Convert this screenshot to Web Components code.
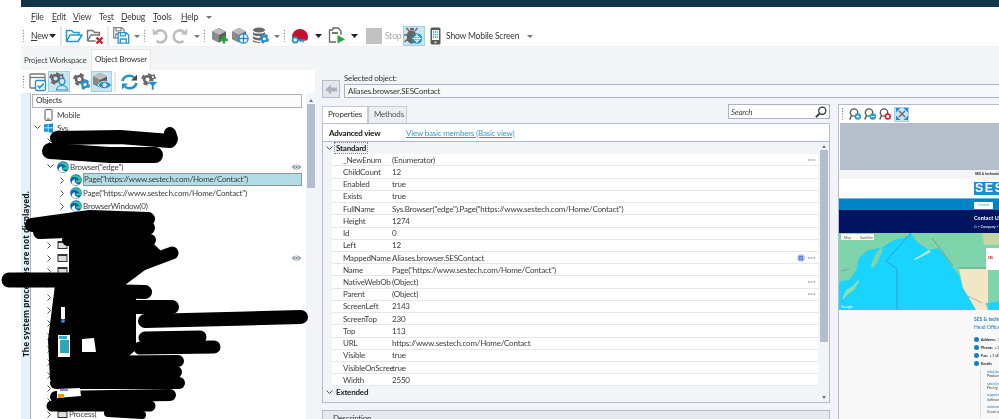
<!DOCTYPE html>
<html><head><meta charset="utf-8"><title>Object Browser</title>
<style>
html,body{margin:0;padding:0;background:#fff;overflow:hidden}
body{width:999px;height:419px;font:8px Lato,"Noto Sans",sans-serif;letter-spacing:-.2px;color:#333}
</style></head><body>
<x-app>
  <x-menubar slot="menu">
    <x-m style="width:21px"><u>F</u>ile</x-m><x-m style="width:21px"><u>E</u>dit</x-m><x-m style="width:26px"><u>V</u>iew</x-m><x-m style="width:22px">Te<u>s</u>t</x-m><x-m style="width:32px"><u>D</u>ebug</x-m><x-m style="width:28px"><u>T</u>ools</x-m><x-m style="width:25px"><u>H</u>elp</x-m><x-icon name="caret" style="width:6px"></x-icon>
  </x-menubar>
  <x-toolbar slot="tools">
    <x-icon name="grip" style="width:3px"></x-icon>
    <x-m style="margin-left:6px;width:18px"><u>N</u>ew</x-m><x-icon name="caretd" style="margin-left:0;width:6px"></x-icon>
    <x-icon name="sep" style="margin-left:5px;width:2px"></x-icon>
    <x-icon name="open" style="margin-left:3px;width:18px"></x-icon>
    <x-icon name="closex" style="margin-left:3px;width:18px"></x-icon>
    <x-icon name="sep" style="margin-left:3px;width:2px"></x-icon>
    <x-icon name="save" style="margin-left:3px;width:18px"></x-icon>
    <x-icon name="caret" style="margin-left:4px;width:6px"></x-icon>
    <x-icon name="grip" style="margin-left:3px;width:3px"></x-icon>
    <x-icon name="undo" style="margin-left:5px;width:17px"></x-icon>
    <x-icon name="redo" style="margin-left:4px;width:17px"></x-icon>
    <x-icon name="caret" style="margin-left:5px;width:6px"></x-icon>
    <x-icon name="grip" style="margin-left:3px;width:3px"></x-icon>
    <x-icon name="objadd" style="margin-left:5px;width:18px"></x-icon>
    <x-icon name="objnet" style="margin-left:2px;width:18px"></x-icon>
    <x-icon name="dbgear" style="margin-left:3px;width:17px"></x-icon>
    <x-icon name="caret" style="margin-left:5px;width:6px"></x-icon>
    <x-icon name="grip" style="margin-left:3px;width:3px"></x-icon>
    <x-icon name="record" style="margin-left:5px;width:18px"></x-icon>
    <x-icon name="caretd" style="margin-left:6px;width:7px"></x-icon>
    <x-icon name="run" style="margin-left:6px;width:18px"></x-icon>
    <x-icon name="caretd" style="margin-left:5px;width:7px"></x-icon>
    <x-icon name="stop" style="margin-left:8px;width:16px"></x-icon>
    <x-m style="margin-left:3px;width:15px;color:#aaa">Stop</x-m>
    <x-icon name="bug" on style="margin-left:3px;width:22px"></x-icon>
    <x-icon name="mobile" style="margin-left:4px;width:12px"></x-icon>
    <x-m style="margin-left:5px;width:76px">Show Mobile Screen</x-m>
    <x-icon name="caret" style="margin-left:5px;width:6px"></x-icon>
  </x-toolbar>
  <x-tabs slot="tabs"></x-tabs>
  <x-objects slot="left">
    <x-tree-row icon="mobile" label="Mobile" indent="0"></x-tree-row>
    <x-tree-row icon="win" label="Sys" indent="0" exp="v"></x-tree-row>
    <x-tree-row icon="edge" indent="1" exp=">"></x-tree-row>
    <x-tree-row icon="edge" indent="1" exp=">"></x-tree-row>
    <x-tree-row icon="edge" label="Browser(&quot;edge&quot;)" indent="1" exp="v" eye></x-tree-row>
    <x-tree-row icon="edge" label="Page(&quot;https://www.sestech.com/Home/Contact&quot;)" indent="2" exp=">" selected></x-tree-row>
    <x-tree-row icon="edge" label="Page(&quot;https://www.sestech.com/Home/Contact&quot;)" indent="2" exp=">"></x-tree-row>
    <x-tree-row icon="edge" label="BrowserWindow(0)" indent="2" exp=">"></x-tree-row>
    <x-tree-row icon="proc" indent="1" exp=">"></x-tree-row>
    <x-tree-row icon="proc" indent="1" exp=">"></x-tree-row>
    <x-tree-row icon="proc" indent="1" exp=">"></x-tree-row>
    <x-tree-row icon="proc" indent="1" exp=">" eye></x-tree-row>
    <x-tree-row icon="proc" indent="1" exp=">"></x-tree-row>
    <x-tree-row icon="proc" indent="1" exp=">"></x-tree-row>
    <x-tree-row icon="proc" indent="1" exp=">"></x-tree-row>
    <x-tree-row icon="proc" indent="1" exp=">"></x-tree-row>
    <x-tree-row icon="proc" indent="1" exp=">"></x-tree-row>
    <x-tree-row icon="proc" indent="1" exp=">"></x-tree-row>
    <x-tree-row icon="proc" indent="1" exp=">"></x-tree-row>
    <x-tree-row icon="proc" indent="1" exp=">"></x-tree-row>
    <x-tree-row icon="proc" indent="1" exp=">"></x-tree-row>
    <x-tree-row icon="proc" indent="1" exp=">"></x-tree-row>
    <x-tree-row icon="proc" indent="1" exp=">"></x-tree-row>
    <x-tree-row icon="proc" label="Process(" indent="1" exp=">"></x-tree-row>
  </x-objects>
  <x-props slot="right">
    <x-prop k="_NewEnum" v="(Enumerator)" dots></x-prop>
    <x-prop k="ChildCount" v="12"></x-prop>
    <x-prop k="Enabled" v="true"></x-prop>
    <x-prop k="Exists" v="true"></x-prop>
    <x-prop k="FullName" v="Sys.Browser(&quot;edge&quot;).Page(&quot;https://www.sestech.com/Home/Contact&quot;)"></x-prop>
    <x-prop k="Height" v="1274"></x-prop>
    <x-prop k="Id" v="0"></x-prop>
    <x-prop k="Left" v="12"></x-prop>
    <x-prop k="MappedName" v="Aliases.browser.SESContact" dots mark></x-prop>
    <x-prop k="Name" v="Page(&quot;https://www.sestech.com/Home/Contact&quot;)"></x-prop>
    <x-prop k="NativeWebOb" v="(Object)" dots></x-prop>
    <x-prop k="Parent" v="(Object)" dots></x-prop>
    <x-prop k="ScreenLeft" v="2143"></x-prop>
    <x-prop k="ScreenTop" v="230"></x-prop>
    <x-prop k="Top" v="113"></x-prop>
    <x-prop k="URL" v="https://www.sestech.com/Home/Contact"></x-prop>
    <x-prop k="Visible" v="true"></x-prop>
    <x-prop k="VisibleOnScree" v="true"></x-prop>
    <x-prop k="Width" v="2550"></x-prop>
    <x-preview slot="pv"></x-preview>
  </x-props>
  <x-scribble slot="over"></x-scribble>
</x-app>
<script>
const gear=(x,y,r,c)=>`<circle cx="${x}" cy="${y}" r="${r*.55}" fill="none" stroke="${c}" stroke-width="${r*.42}"/><circle cx="${x}" cy="${y}" r="${r*.88}" fill="none" stroke="${c}" stroke-width="${r*.32}" stroke-dasharray="${r*.7} ${r*.68}"/>`;
const cube=(c='#5c5c5c')=>`<path d="M1 4.5 8 1l7 3.5V12l-7 3.5L1 12z" fill="${c}"/><path d="M1 4.5 8 1l7 3.5L8 8z" fill="#bdbdbd"/><path d="M8 8v7.5L1 12V4.5z" fill="#8a8a8a"/>`;
const floppy=(c,x=0,y=0)=>`<g transform="translate(${x} ${y})" fill="none" stroke="${c}" stroke-width="1.3"><path d="M.7.7h8l2.5 2.5v8H.7z" fill="#fff"/><path d="M3 .7v3.2h5V.7M2.8 11V7h6v4"/></g>`;
const ICONS={
 caret:[6,16,`<path d="M0 7h6L3 10z" fill="#777"/>`],
 caretd:[7,16,`<path d="M0 6h7L3.5 10z" fill="#222"/>`],
 grip:[3,16,`<path d="M1.5 2v12" stroke="#888" stroke-width="1.2" stroke-dasharray="1.2 1.6"/>`],
 sep:[2,20,`<path d="M1 0v20" stroke="#dcdfe6" stroke-width="1.5"/>`],
 open:[18,16,`<path d="M1.5 13.5V2.5h5l2 2h5.5v2.5M1.5 13.5h11.5L17 7H5z" fill="none" stroke="#1f9ad8" stroke-width="1.5" stroke-linejoin="round"/>`],
 closex:[18,16,`<path d="M1.5 13V2.5h5l2 2h5V7M1.5 13h8M1.5 13 5 7h9" fill="none" stroke="#777" stroke-width="1.4"/><path d="M10.5 9.5l6 6m0-6-6 6" stroke="#d4202a" stroke-width="2.4"/>`],
 save:[18,18,floppy('#888',1,0)+floppy('#1f9ad8',5.5,5)],
 undo:[17,17,`<path d="M5 5.2A6 6 0 1 1 5.5 14" fill="none" stroke="#bfbfbf" stroke-width="2.6"/><path d="M1.5 1.5 2 8l6-.8z" fill="#bfbfbf"/>`],
 redo:[17,17,`<path d="M12 5.2A6 6 0 1 0 11.5 14" fill="none" stroke="#bfbfbf" stroke-width="2.6"/><path d="M15.5 1.5 15 8l-6-.8z" fill="#bfbfbf"/>`],
 objadd:[18,17,cube()+`<path d="M13 9v7.5M9.2 12.7h7.6" stroke="#22a838" stroke-width="2.6"/>`],
 objnet:[18,17,cube()+`<circle cx="12.5" cy="11.5" r="4.6" fill="#fff" stroke="#1f8fd0" stroke-width="1.3"/><path d="M12.5 7v9M8 11.5h9" stroke="#1f8fd0" stroke-width="1.3"/>`],
 dbgear:[17,17,`<g fill="#6a6a6a"><ellipse cx="7" cy="3" rx="6" ry="2.4"/><path d="M1 5c1 2 11 2 12 0v2.4c-1 2-11 2-12 0zM1 9c1 2 8 2 8 2v2.4c-3 0-7-.5-8-2zM1 13c1 1.6 6 2 7 2v1c-2 0-6-.3-7-1.5z"/></g>`+gear(12.3,11.8,4.6,'#1f8fd0')],
 record:[18,17,`<path d="M1 10a8 8 0 0 1 16 0c0 1.5-.4 2.5-1 3.5H7.500A4 4 0 0 0 1.500 11z" fill="#c8102e"/><circle cx="4.200" cy="13" r="2.600" fill="none" stroke="#1f8fd0" stroke-width="1.700"/><path d="M6.800 13H14m-2 0v2.500m-2.500-2.500v2" stroke="#1f8fd0" stroke-width="1.600"/>`],
 run:[18,17,`<path d="M5 3V1h5l3 3v4M5 3H1.500v12H8" fill="none" stroke="#666" stroke-width="1.300"/><rect x="4" y="5" width="6" height="2" fill="#777"/><path d="M9.500 8 17 12.200 9.500 16.500z" fill="#22a838"/>`],
 stop:[16,16,`<rect width="16" height="16" fill="#c2c2c2"/>`],
 bug:[22,20,`<path d="M6 4.500h5l2 3v7l-3 3H7l-3-3v-7z" fill="#666"/><path d="M6 5 3.500 2m8.500 3 2.500-3M4 9H1M4 13.500 1.500 16" stroke="#666" stroke-width="1.300"/><path d="M7 3h4" stroke="#666" stroke-width="2"/><circle cx="14" cy="12.500" r="5.200" fill="#1f8fd0"/><path d="M14 8v9M9.500 12.500h9" stroke="#fff" stroke-width="1"/><circle cx="14" cy="12.500" r="2.600" fill="none" stroke="#fff" stroke-width="1"/>`],
 mobile:[11,18,`<rect x=".5" y=".5" width="10" height="17" rx="1.500" fill="#5a5a5a"/><rect x="2" y="3" width="7" height="10" fill="#fff"/><path d="M3 5h1.200m.9 0h1.200m.9 0h.8M3 7.500h1.200m.9 0h1.200m.9 0h.8M3 10h1.200m.9 0h1.200m.9 0h.8" stroke="#1f8fd0" stroke-width="1.300"/><circle cx="5.500" cy="15.300" r="1.100" fill="#ddd"/>`],
 mobsmall:[9,12,`<rect x="1" y=".6" width="7" height="10.800" rx="1" fill="#fff" stroke="#555" stroke-width="1"/><path d="M3 10h3" stroke="#555"/>`],
 win:[9,10,`<path d="M0 1.500 3.800 1v3.600H0zM4.500.9 9 .2v4.400H4.500zM0 5.300h3.800v3.700L0 8.500zM4.500 5.300H9V10l-4.500-.7z" fill="#0f8fd9"/>`],
 edge:[12,12,`<circle cx="6" cy="6" r="5.800" fill="#0f5fa8"/><path d="M.7 4.500A5.800 5.800 0 0 1 11.800 6.500c0 1.300-1 2-2.500 2H5.500c0-2 2.500-3.500 4-2C8 3 3.500 2 .7 4.500z" fill="#2fc3a8"/><path d="M5 5.500c-1 2.500 1 4.700 3.700 4.600C7 11.800 3.500 12 2 9.300 1.200 7.500 3 5.500 5 5.500z" fill="#fff"/>`],
 proc:[11,10,`<rect x=".5" y="1" width="10" height="8" fill="#333"/><rect x="1.500" y="3" width="8" height="5" fill="#ddd"/>`],
 eye:[11,8,`<path d="M.5 4C3 .6 8 .6 10.500 4 8 7.400 3 7.400.5 4z" fill="#9aa3ad"/><circle cx="5.500" cy="4" r="2" fill="#e9ecef"/><circle cx="5.500" cy="4" r="1" fill="#717a85"/>`],
 winchk:[17,18,`<rect x="1" y="1" width="15" height="14" rx="1" fill="#fff" stroke="#777" stroke-width="1.300"/><path d="M1 4.500h15" stroke="#777" stroke-width="1.300"/><rect x="6.500" y="7.500" width="10" height="10" rx="1.500" fill="#fff" stroke="#1f8fd0" stroke-width="1.300"/><path d="M8.500 12.500l2.200 2.300 4-4.300" fill="none" stroke="#1f8fd0" stroke-width="1.600"/>`],
 gearuser:[20,19,gear(6.5,6.5,6,'#666')+gear(12,5,3.3,'#666')+`<circle cx="13" cy="9.500" r="3" fill="#cdeaf3" stroke="#1f8fd0" stroke-width="1.200"/><path d="M7.500 18c0-6 11-6 11 0z" fill="#cdeaf3" stroke="#1f8fd0" stroke-width="1.200"/>`],
 gearblue:[17,17,gear(6.3,6.3,6,'#666')+gear(12,11.5,5,'#1f8fd0')],
 cubeeye:[20,19,cube()+`<path d="M6 13c3-5 10-5 13.500 0-3.500 5-10.500 5-13.500 0z" fill="#1f8fd0" stroke="#cdeaf3"/><circle cx="12.700" cy="13" r="2.200" fill="#cdeaf3"/>`],
 refresh:[17,16,`<path d="M1.500 7A7 6 0 0 1 13 3.200M15.500 9A7 6 0 0 1 4 12.800" fill="none" stroke="#1f8fd0" stroke-width="2.400"/><path d="M16 .5v6h-6z" fill="#444"/><path d="M1 15.500v-6h6z" fill="#1f8fd0"/>`],
 gearfilter:[17,17,gear(6.5,6.5,6,'#666')+gear(12,4,3,'#666')+`<path d="M6.500 8.500H17L13 12.500V17h-2.500v-4.500z" fill="#1f8fd0" stroke="#fff" stroke-width=".6"/>`],
 back:[12,11,`<path d="M6 .5.500 5.500 6 10.500V7.500h6V3.500H6z" fill="#aab1bd"/>`],
 search:[12,12,`<circle cx="7.300" cy="4.700" r="3.600" fill="none" stroke="#333" stroke-width="1.200"/><path d="M4.700 7.300.9 11.200" stroke="#333" stroke-width="1.800"/>`],
 zoomin:[12,12,`<circle cx="5" cy="4.500" r="3.700" fill="none" stroke="#555" stroke-width="1.300"/><path d="M2.500 7.500.8 11.500" stroke="#555" stroke-width="1.500"/><circle cx="8.800" cy="8.500" r="3.200" fill="#1f9ad8"/><path d="M7 8.500h3.600M8.800 6.700v3.600" stroke="#fff" stroke-width="1"/>`],
 zoomout:[12,12,`<circle cx="5" cy="4.500" r="3.700" fill="none" stroke="#555" stroke-width="1.300"/><path d="M2.500 7.500.8 11.500" stroke="#555" stroke-width="1.500"/><circle cx="8.800" cy="8.500" r="3.200" fill="#1f9ad8"/><path d="M7 8.500h3.600" stroke="#fff" stroke-width="1.200"/>`],
 zoomstop:[12,12,`<circle cx="5" cy="4.500" r="3.700" fill="none" stroke="#555" stroke-width="1.300"/><path d="M2.500 7.500.8 11.500" stroke="#555" stroke-width="1.500"/><circle cx="8.800" cy="8.500" r="3.200" fill="#e01b2f"/><rect x="7.400" y="7.100" width="2.800" height="2.800" fill="#fff"/>`],
 fit:[12,12,`<path d="M0 0h4.500L0 4.500zM12 0v4.500L7.500 0zM0 12V7.500L4.500 12zM12 12H7.500L12 7.500z" fill="#1f8fd0"/><path d="M3 3l6 6m0-6-6 6" stroke="#667" stroke-width="1.400"/>`],
 mark:[8,8,`<circle cx="4" cy="4" r="3.800" fill="#aab9ea"/><circle cx="4" cy="4" r="2.300" fill="#2d5fc4"/><path d="M4 0v8M0 4h8" stroke="#dfe6fa" stroke-width=".6"/>`],
 dots:[8,4,`<path d="M0 2h8" stroke="#777" stroke-width="1.100" stroke-dasharray="1.700 1.100"/>`]
};
const def=(n,html)=>{
 customElements.define(n,class extends HTMLElement{
  connectedCallback(){ if(this.shadowRoot)return;
    const s=this.attachShadow({mode:'open'});
    s.innerHTML=typeof html==='function'?html(this):html; }
 });
};
def('x-icon',h=>{const [w,ht,b]=ICONS[h.getAttribute('name')];const on=h.hasAttribute('on');
 return `<style>:host{display:inline-flex;flex:none;align-items:center;justify-content:center;${on?'background:#c9e5ef;outline:1px solid #a6cfe0;outline-offset:-1px;':''}}svg{display:block}</style><svg width="${w}" height="${ht}" viewBox="0 0 ${w} ${ht}" overflow="visible">${b}</svg>`});
def('x-m',`<style>:host{display:inline-block;flex:none;white-space:nowrap;color:#3a3a3a;font-size:8.6px}u{text-underline-offset:1px}</style><slot></slot>`);
def('x-menubar',`<style>:host{display:flex;align-items:center;height:18px;padding:1px 0 0 10px;box-sizing:border-box;background:#fff}</style><slot></slot>`);
def('x-toolbar',`<style>:host{display:flex;align-items:center;height:21px;background:#fff;padding-left:1px}</style><slot></slot>`);
def('x-tabs',`<style>:host{display:flex;align-items:flex-end;height:24px;background:#f4f5f7;box-sizing:border-box;border-top:1px solid #f0f0f2}
.t{padding:0 0 0 3px;height:19px;line-height:19px;color:#444;width:67px;white-space:nowrap}
.a{background:#fff;width:55px;height:20px;line-height:19px;border:1px solid #e4e6ea;border-bottom:0;padding:0 0 0 3px;color:#333}</style>
<div class="t">Project Workspace</div><div class="t a">Object Browser</div>`);
def('x-app',`<style>:host{display:block;width:999px;height:419px;overflow:hidden;position:relative;padding-left:21px;box-sizing:border-box;background:#fff;filter:blur(.3px)}
.bar{height:7px;background:#14344a}
.main{display:flex;height:349px}
::slotted([slot=over]){position:absolute;left:0;top:0}</style>
<div class="bar"></div><slot name="menu"></slot><slot name="tools"></slot><slot name="tabs"></slot>
<div class="main"><slot name="left"></slot><slot name="right"></slot></div><slot name="over"></slot>`);
def('x-objects',`<style>:host{display:block;width:294px;flex:none;background:#fff;height:349px;overflow:hidden}
.tb{display:flex;align-items:center;height:23px;padding-left:1px}
.tb x-icon{height:21px}
.body{display:flex;height:326px}
.strip{width:9px;background:#e4f3f9;border-right:1px solid #aab2c3;flex:none;position:relative;overflow:hidden}
.v{position:absolute;left:1px;top:112px;writing-mode:vertical-rl;transform:rotate(180deg);font:700 8.3px "Noto Sans",sans-serif;letter-spacing:0;white-space:nowrap;color:#1a1a1a;line-height:7px;height:152px;text-align:left}
.tree{flex:none;width:272px;padding-left:1px}
.hd{height:12px;line-height:11px;border:1px solid #aab2c3;background:#fbfbfc;margin:1px 0 0;padding-left:3px;width:265px}
.sb{width:10px;margin-left:2px;background:#f4f5f8;flex:none;display:flex;flex-direction:column;align-items:center}
.sb i{display:block;width:0;height:0;border:2.5px solid transparent;border-bottom:3px solid #777;margin:4px 0 2px}
.sb b{display:block;width:8px;height:84px;background:#b5bdcb}
.edge{width:1px;background:#c4cad6;margin-left:1px;flex:none}
.fill{flex:1;background:#f3f4f7}</style>
<div class="tb">
<x-icon name="grip" style="width:3px"></x-icon>
<x-icon name="winchk" style="margin-left:4px;width:17px"></x-icon>
<x-icon name="gearuser" on style="margin-left:2px;width:22px"></x-icon>
<x-icon name="gearblue" style="margin-left:2px;width:18px"></x-icon>
<x-icon name="cubeeye" on style="margin-left:1px;width:21px"></x-icon>
<x-icon name="sep" style="margin-left:2px;width:2px"></x-icon>
<x-icon name="refresh" style="margin-left:5px;width:17px"></x-icon>
<x-icon name="gearfilter" style="margin-left:3px;width:17px"></x-icon></div>
<div class="body"><div class="strip"><div class="v">The system processes are not displayed.</div></div>
<div class="tree"><div class="hd">Objects</div><slot></slot></div>
<div class="sb"><i></i><b></b></div><div class="edge"></div><div class="fill"></div></div>`);
def('x-tree-row',h=>{const ind=+h.getAttribute('indent'),e=h.getAttribute('exp'),sel=h.hasAttribute('selected'),eye=h.hasAttribute('eye');
 const ic=h.getAttribute('icon')==='mobile'?'mobsmall':h.getAttribute('icon');
 return `<style>:host{display:flex;align-items:center;height:13px;white-space:nowrap;color:#3c3c3c;width:272px}
 .ex{width:9px;flex:none;margin-left:${2+ind*13}px;height:13px}.ex svg{display:block;margin-top:4px}
 x-icon{margin-left:1px;margin-right:${ic==='win'||ic==='mobsmall'?4:1}px}
 .l{${sel?'background:#b2dde6;outline:1px solid #8d979e;outline-offset:-1px;flex:none;width:219px;box-sizing:border-box;padding:0 1px;line-height:13px;':''}}
 .sp{flex:1}.eye{margin-right:2px}</style>
 <span class="ex">${e==='v'?'<svg width="7" height="5"><path d="M.5.5 3.5 3.5 6.5.5" fill="none" stroke="#555"/></svg>':e==='>'?'<svg width="5" height="7"><path d="M.5.5 3.5 3.5.5 6.5" fill="none" stroke="#555"/></svg>':''}</span>
 <x-icon name="${ic}"></x-icon><span class="l">${h.getAttribute('label')||''}</span><span class="sp"></span>${eye?'<x-icon class="eye" name="eye"></x-icon>':''}`});
def('x-props',`<style>:host{display:block;flex:1;background:#f3f4f7;height:349px;overflow:hidden;padding-left:7px;box-sizing:border-box;min-width:0}
.head{display:flex;height:34px;gap:4px}
.back{width:18px;height:18px;box-sizing:border-box;margin-top:10px;flex:none;background:#e4e6eb;border:1px solid #b5bccb;display:flex;align-items:center;justify-content:center}
.sel{flex:1;padding-top:3px;min-width:0;color:#333}
.inp{height:14px;line-height:13px;box-sizing:border-box;border:1px solid #aab2c3;background:#f7f8fa;padding-left:3px;width:680px;margin-top:1px}
.lab{height:10px;line-height:10px}
.cols{display:flex;gap:8px;height:315px}
.c1{width:508px;flex:none}
.tabs{height:19px;display:flex;align-items:flex-end}
.tab{height:17px;line-height:15px;box-sizing:border-box;border:1px solid #c4cad6;border-bottom:0;padding-left:5px}
.tab.a{background:#fff;width:46px}
.tab.b{background:#eceef2;width:39px;padding-left:5px;color:#555}
.srch{margin-left:auto;width:102px;height:15px;align-self:flex-start;box-sizing:border-box;border:1px solid #aab2c3;background:#fff;display:flex;align-items:center;justify-content:space-between;padding:0 2px;font-style:italic;color:#444}
.box{height:280px;border:1px solid #b5bccb;box-sizing:border-box;background:#f3f4f7;display:flex;flex-direction:column}
.adv{height:17px;background:#fff;border-bottom:1px solid #b0b7c6;display:flex;align-items:center;padding-left:6px;flex:none}
.adv b{color:#111;width:77px}.adv a{color:#3b9dc8;text-decoration:underline}
.grid{display:flex;flex:1;min-height:0}
.list{width:495px;flex:none}
.cat{height:12.23px;line-height:12px;display:flex;align-items:center;font-weight:700;color:#222;padding-left:3px;box-sizing:border-box}
.cat svg{margin-right:2px;flex:none}.cat span{outline:1px dotted #888;padding:0 1px;background:#eceef2;line-height:10px}
.cat.n span{outline:0;background:none}
.sb{width:10px;margin-left:1px;flex:none;display:flex;flex-direction:column;align-items:center;height:100%}
.sb i{width:0;height:0;border:2.5px solid transparent;border-bottom:3px solid #777;margin:1px 0 2px;display:block}
.sb b{width:8px;height:192px;background:#b5bdcb;display:block}
.sb u{width:0;height:0;border:2.5px solid transparent;border-top:3px solid #777;margin-top:auto;margin-bottom:1px;display:block}
.desc{height:30px;margin-top:7px;background:#e6e9ef;border:1px solid #b5bccb;box-sizing:border-box;padding:2px 0 0 10px}
.pv{flex:none;width:161px;height:315px}
</style>
<div class="head"><div class="back"><x-icon name="back"></x-icon></div><div class="sel"><div class="lab">Selected object:</div><div class="inp">Aliases.browser.SESContact</div></div></div>
<div class="cols"><div class="c1"><div class="tabs"><div class="tab a">Properties</div><div class="tab b">Methods</div><div class="srch"><span>Search</span><x-icon name="search"></x-icon></div></div>
<div class="box"><div class="adv"><b>Advanced view</b><a>View basic members (Basic view)</a></div>
<div class="grid"><div class="list"><div class="cat"><svg width="7" height="5"><path d="M.5.5 3.5 3.5 6.5.5" fill="none" stroke="#555"/></svg><span>Standard</span></div><slot></slot>
<div class="cat n"><svg width="7" height="5"><path d="M.5.5 3.5 3.5 6.5.5" fill="none" stroke="#555"/></svg><span>Extended</span></div></div>
<div class="sb"><i></i><b></b><u></u></div></div></div>
<div class="desc">Description</div></div>
<div class="pv"><slot name="pv"></slot></div></div>`);
def('x-prop',h=>`<style>:host{display:flex;height:12.23px;align-items:center;box-sizing:border-box;margin-left:9px;background:#fff;border-bottom:1.2px solid #e6e7ea;color:#3c3c3c;white-space:nowrap}
.k{width:49px;margin-left:11px;flex:none}.v{flex:1}
.r{display:flex;align-items:center;gap:3px;margin-right:2px}</style>
<span class="k">${h.getAttribute('k')}</span><span class="v">${h.getAttribute('v')}</span><span class="r">${h.hasAttribute('mark')?'<x-icon name="mark"></x-icon>':''}${h.hasAttribute('dots')?'<x-icon name="dots"></x-icon>':''}</span>`);
def('x-preview',`<style>:host{display:block;width:161px;height:315px;background:#fff;border-left:1px solid #b5bccb;border-top:1px solid #b5bccb;box-sizing:border-box;overflow:hidden;font-size:3.5px;letter-spacing:0;color:#222}
.tb{height:18px;display:flex;align-items:center;padding-left:2px}
.gray{height:47px;background:#b6bdcb;margin-left:1px}
.top{height:9px;background:#f4f4f4;padding-left:136px;line-height:9px;font-weight:700;white-space:nowrap}
.logo{height:19px;background:#fff;padding:3px 0 0 135px;box-sizing:border-box}
.logo div{width:30px;height:13px;background:#1c8ed0;color:#fff;font:700 12.5px/13px "Liberation Sans",sans-serif;letter-spacing:1.5px;padding-left:1px}
.blue{height:12px;background:#0084c8;padding:3px 0 0 135px;box-sizing:border-box;border-top:1px solid #6fb8dd}
.blue span{display:block;background:#fff;width:19px;height:7px;line-height:7px;color:#5aa;text-align:center}
.navy{height:23px;background:#001460;color:#fff;padding:5px 0 0 135px;box-sizing:border-box;white-space:nowrap}
.navy b{display:block;font-size:5.5px;line-height:7px}.navy span{font-size:3.6px;display:block;margin-top:2px}
.map{height:77px;background:#19d4ff}
.map svg{display:block}
.low{height:110px;background:#f8f8f8;padding:6px 0 0 135px;box-sizing:border-box;white-space:nowrap}
.h{color:#2a7fb8;font-weight:700;font-size:5px;line-height:7px}.o{color:#2a7fb8;font-size:5px;line-height:8px;margin-bottom:4px}
.i{display:flex;align-items:center;height:8.2px;font-size:3.8px;gap:2px}.i s{width:5px;height:5px;border-radius:50%;background:#1c7cc0;display:block;flex:none}
.list{margin:2px 0 0 6px;border-left:1px solid #dcdcdc;padding-left:6px}
.e{height:11.8px;line-height:4.5px;color:#1c7cc0}.e em{font-style:normal;color:#444;display:block}</style>
<div class="tb"><x-icon name="grip" style="width:3px"></x-icon><x-icon name="zoomin" style="margin-left:5px;width:12px"></x-icon><x-icon name="zoomout" style="margin-left:3px;width:12px"></x-icon><x-icon name="zoomstop" style="margin-left:3px;width:12px"></x-icon><x-icon name="fit" on style="margin-left:3px;width:15px;height:15px"></x-icon></div>
<div class="gray"></div><div class="top">SES &amp; technologies</div>
<div class="logo"><div>SES</div></div>
<div class="blue"><span>Contact</span></div>
<div class="navy"><b>Contact Us</b><span>⌂ &gt; Company &gt;</span></div>
<div class="map"><svg width="161" height="77" viewBox="0 0 161 77">
<rect width="161" height="77" fill="#19d4ff"/>
<path d="M0 0H70V3L55 7 42 15 29 17 20 25 17 38 10 47 2 48 0 50z" fill="#7ed4ab"/>
<path d="M42 15 44 16 38 30 33 36 32 32 37 20z" fill="#7ed4ab"/>
<path d="M3 66 7 57 14 53 19 47 20 49 15 57 8 62 5 66z" fill="#8fdcae"/>
<path d="M72 0H161V68L149 70 149 77H137L129 63 124 55 120 42 114 35 105 22 99 15 90 17 79 10 75 5z" fill="#7ed4ab"/>
<path d="M90 17 82 22 75 26 76 27 84 23 92 19z" fill="#b6ecd4"/>
<path d="M120 36H149V70H146L149 77H137L129 63 124 55z" fill="#f1e7c6"/>
<path d="M143 0H161V12H145z" fill="#c5d6a5"/>
<path d="M120 35H161M93 5 114 33" stroke="#667" stroke-width=".5" fill="none"/>
<path d="M72 0 47 28 58 36V77" stroke="#3a7f97" stroke-width=".6" fill="none"/>
<path d="M129 63l14 7M2 38l8-2" stroke="#778" stroke-width=".5" fill="none"/>
<rect x="2" y="1" width="33" height="6" fill="#fff"/><path d="M18 1v6" stroke="#ddd" stroke-width=".5"/>
<text x="5" y="5.500" font-size="3.5" fill="#555" font-family="Noto Sans">Map</text><text x="21" y="5.500" font-size="3.5" fill="#555" font-family="Noto Sans">Satellite</text>
<rect x="147" y="15" width="14" height="22" fill="#fff"/><text x="149" y="26" font-size="3" fill="#c22" font-family="Noto Sans" font-weight="700">SES</text>
<text x="2" y="75" font-size="3.5" fill="#fff" font-family="Noto Sans">Google</text>
</svg></div>
<div class="low"><div class="h">SES &amp; technologies</div><div class="o">Head Office</div>
<div class="i"><s></s><b>Address:</b> 33</div><div class="i"><s></s><b>Phone:</b> +1 (4</div><div class="i"><s></s><b>Fax:</b> +1 (450</div><div class="i"><s></s><b>Emails</b></div>
<div class="list"><div class="e">info@se<em>Product</em></div><div class="e">sales@s<em>Pricing</em></div><div class="e">support<em>Software</em></div><div class="e">webmas<em>Send us</em></div></div></div>`);
def('x-scribble',`<style>:host{display:block;width:999px;height:419px;pointer-events:none}svg{display:block}</style>
<svg width="999" height="419" viewBox="0 0 999 419"><g fill="none" stroke="#000" stroke-linecap="round" stroke-linejoin="round">
<path d="M57 138 120 137 170 141" stroke-width="14"/><path d="M170 133l2 6" stroke-width="12"/>
<path d="M50 151 110 155 155 155" stroke-width="16"/>
<path d="M32 225 90 217 148 219" stroke-width="14"/><path d="M40 232 148 228" stroke-width="14"/><path d="M68 240 150 240" stroke-width="12"/>
<path d="M172 253 140 265 118 280" stroke-width="13"/>
<path d="M9 280 120 280" stroke-width="15"/><path d="M62 290 145 292" stroke-width="14"/>
<path d="M90 307 172 307" stroke-width="14"/><path d="M145 321 301 317" stroke-width="14"/>
<path d="M145 338 200 337" stroke-width="13"/><path d="M140 348 214 347" stroke-width="13"/>
<path d="M60 362 178 361" stroke-width="12"/><path d="M56 372 176 372" stroke-width="12"/><path d="M56 383 179 383" stroke-width="12"/><path d="M56 397 170 395" stroke-width="12"/><path d="M52 406 150 406" stroke-width="11"/></g>
<path d="M69 240H150L165 255 125 285H69z" fill="#000"/><path d="M55 285H136L136 350 100 380H50L48 340z" fill="#000"/><path d="M108 413 142 415" stroke="#000" stroke-width="8" stroke-linecap="round"/>
<g><rect x="58" y="335" width="12" height="22" fill="#fff"/><rect x="60" y="340" width="9" height="13" fill="#2aa8b8"/><rect x="59" y="336" width="8" height="3" fill="#21b4e0"/>
<path d="M82 339 94 338 96 352 82 352z" fill="#fff"/><rect x="61" y="307" width="4" height="12" fill="#fff"/><circle cx="63" cy="321" r="2" fill="#3a7fd0"/>
<path d="M57 389 80 388 81 396 57 398z" fill="#fff"/><rect x="58" y="394" width="6" height="4" fill="#e09a10"/><rect x="60" y="389" width="8" height="2" fill="#8a8ae0"/></g></svg>`);
</script>
</body></html>
